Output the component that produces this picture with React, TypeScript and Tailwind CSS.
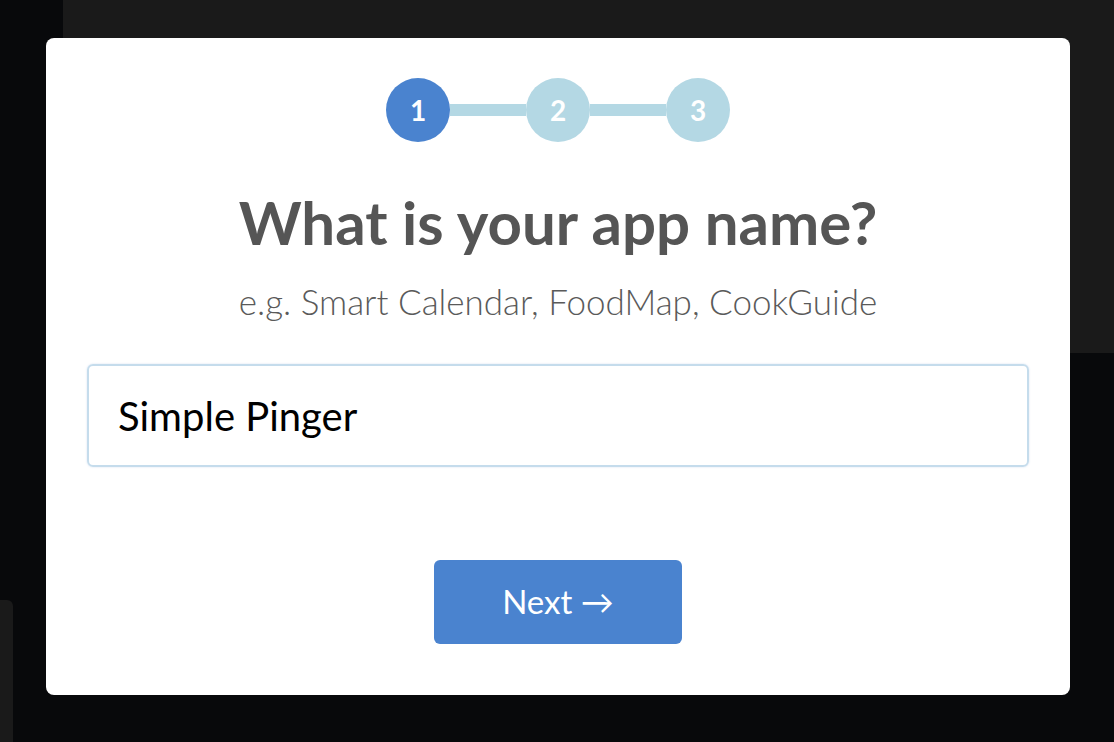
import { useState } from 'react';

const steps = [1, 2, 3];

export default function App() {
  const [appName, setAppName] = useState('Simple Pinger');
  const current = 1;

  return (
    <div className="relative h-[742px] w-full overflow-hidden bg-[#08090b] font-['Lato','Liberation_Sans',sans-serif]">
      {/* page behind the overlay */}
      <div className="absolute left-[63px] right-0 top-0 h-[353px] bg-[#1a1a1a]" />
      <div className="absolute bottom-0 left-0 top-[600px] w-[13px] rounded-tr-[6px] bg-[#1a1a1a]" />

      {/* wizard modal */}
      <div className="absolute left-[46px] top-[38px] flex h-[657px] w-[1024px] flex-col items-center rounded-[8px] bg-white">
        <div className="mt-[40px] flex items-center">
          {steps.map((n, i) => (
            <div key={n} className="flex items-center">
              {i > 0 && <div className="h-[12px] w-[76px] bg-[#b4d8e4]" />}
              <div
                className={
                  n === current
                    ? 'flex h-[64px] w-[64px] items-center justify-center rounded-full bg-[#4a83cf] text-[28px] font-bold text-white'
                    : 'flex h-[64px] w-[64px] items-center justify-center rounded-full bg-[#b4d8e4] text-[28px] font-bold text-white'
                }
              >
                {n}
              </div>
            </div>
          ))}
        </div>

        <h1 className="mt-[43px] text-[60px] font-bold leading-[74px] text-[#555555]">What is your app name?</h1>
        <p className="mt-[20px] text-[35px] font-light leading-[44px] text-[#5a5a5a]">
          e.g. Smart Calendar, FoodMap, CookGuide
        </p>

        <div className="mt-[41px] w-full px-[41px]">
          <input
            value={appName}
            onChange={(e) => setAppName(e.target.value)}
            className="h-[103px] w-full rounded-[6px] border-2 border-[#c5dcec] px-[29px] text-[40px] text-black shadow-[0_0_2px_rgba(74,131,207,0.25)] outline-none"
          />
        </div>

        <button className="mt-[93px] flex h-[84px] w-[248px] items-center justify-center rounded-[6px] bg-[#4a83cf] text-[33px] text-white">
          Next →
        </button>
      </div>
    </div>
  );
}
